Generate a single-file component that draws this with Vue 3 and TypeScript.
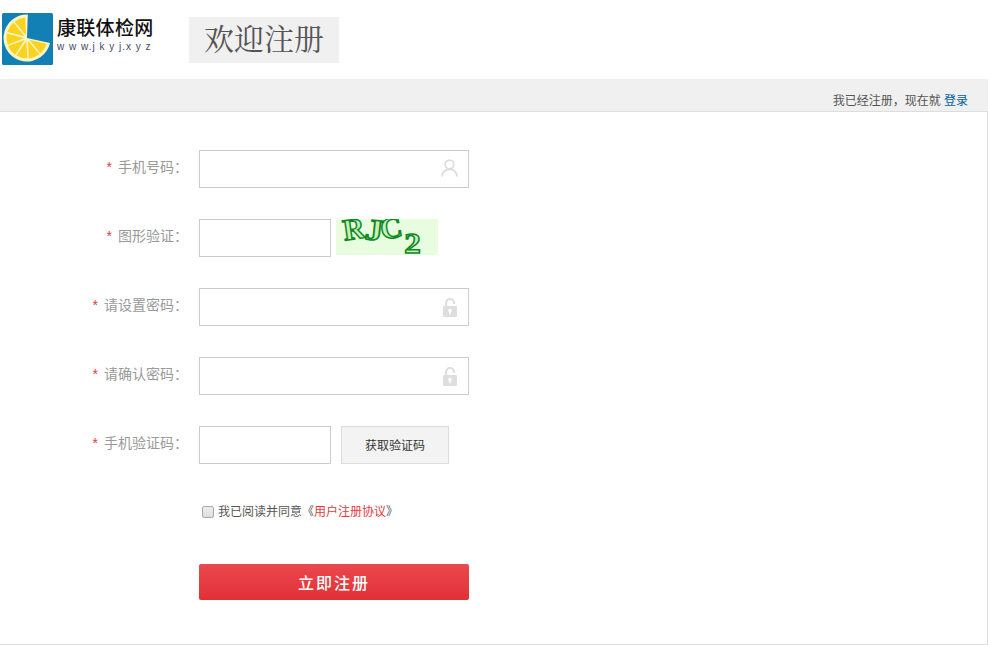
<script setup lang="ts">
const fields = [
  { label: "手机号码：", type: "user" },
  { label: "图形验证：", type: "captcha" },
  { label: "请设置密码：", type: "lock" },
  { label: "请确认密码：", type: "lock" },
  { label: "手机验证码：", type: "sms" },
];

// lemon segments, drawn from the centre of the fruit
const wedgeAngles = [16, 52, 88, 124, 160, 196, 232];
function wedge(a: number) {
  const r = (d: number) => (d * Math.PI) / 180;
  const cx = 25;
  const cy = 25;
  const p = (d: number, l: number) =>
    `${(cx + l * Math.cos(r(d))).toFixed(2)} ${(cy + l * Math.sin(r(d))).toFixed(2)}`;
  return `M${p(a + 17, 3)}L${p(a + 1, 20.5)}A20.500 20.500 0 0 1 ${p(a + 33, 20.5)}Z`;
}
</script>

<template>
  <div class="page">
    <header class="top">
      <div class="logo">
        <svg class="logo-mark" width="51" height="52" viewBox="0 0 51 52">
          <rect width="51" height="52" rx="1.5" fill="#1280b5" />
          <path d="M25 25L25.800 1.500A23.500 23.500 0 1 0 48 30Z" fill="#fbf5c4" />
          <path v-for="a in wedgeAngles" :key="a" :d="wedge(a)" fill="#fbd31f" />
        </svg>
        <div class="logo-text">
          <div class="logo-name">康联体检网</div>
          <div class="logo-url">w w w.j k y j.x y z</div>
        </div>
      </div>
      <h1 class="title">欢迎注册</h1>
    </header>

    <div class="bar">我已经注册，现在就 <a class="login">登录</a></div>

    <main class="panel">
      <div v-for="f in fields" :key="f.label" class="row">
        <label class="label"><i>*</i>{{ f.label }}</label>
        <div v-if="f.type === 'user' || f.type === 'lock'" class="input wide">
          <svg v-if="f.type === 'user'" class="icon user" width="17" height="18" viewBox="0 0 17 18" fill="none" stroke="#dcdcdc" stroke-width="1.700">
            <circle cx="8.500" cy="5.500" r="4.300" />
            <path d="M1 17.500C1.400 12.800 4.500 10.400 8.500 10.400s7.100 2.400 7.500 7.100" />
          </svg>
          <svg v-else class="icon lock" width="14" height="19" viewBox="0 0 14 19">
            <path d="M3 9V5a4 4 0 0 1 8 0v1" fill="none" stroke="#dedede" stroke-width="2.200" />
            <rect y="8" width="14" height="11" rx="1" fill="#dedede" />
            <circle cx="7" cy="12.500" r="1.800" fill="#fff" />
            <rect x="6.200" y="13" width="1.600" height="3.200" fill="#fff" />
          </svg>
        </div>
        <template v-else>
          <div class="input short"></div>
          <div v-if="f.type === 'captcha'" class="captcha">
            <span class="c1">R</span><span class="c2">J</span><span class="c3">C</span><span class="c4">2</span>
          </div>
          <button v-else class="sms" type="button">获取验证码</button>
        </template>
      </div>

      <div class="agree">
        <span class="check"></span>
        我已阅读并同意《<a class="terms">用户注册协议</a>》
      </div>

      <button class="submit" type="button">立即注册</button>
    </main>
  </div>
</template>

<style>
html,
body {
  margin: 0;
  background: #fff;
}
</style>

<style scoped>
.page {
  width: 988px;
  height: 645px;
  overflow: hidden;
  font-family: "Liberation Sans", "Noto Sans CJK SC", sans-serif;
}
.top {
  height: 79px;
  display: flex;
  align-items: flex-start;
}
.logo {
  display: flex;
  width: 187px;
  margin-top: 13px;
  padding-left: 2px;
  box-sizing: border-box;
}
.logo-mark {
  flex: none;
}
.logo-text {
  margin-left: 4px;
  padding-top: 4px;
}
.logo-name {
  font-size: 19px;
  font-weight: 500;
  line-height: 24px;
  letter-spacing: 0.3px;
  color: #111;
  white-space: nowrap;
}
.logo-url {
  font-size: 10px;
  line-height: 12px;
  color: #3d4a66;
  letter-spacing: 1px;
  white-space: nowrap;
}
.title {
  margin: 17px 0 0 2px;
  width: 150px;
  height: 46px;
  background: #f0f0f0;
  text-align: center;
  font-family: "Liberation Serif", "Noto Serif CJK SC", "Noto Sans CJK SC", serif;
  font-size: 30px;
  font-weight: 400;
  line-height: 46px;
  color: #555;
}
.bar {
  height: 32px;
  box-sizing: border-box;
  background: #f0f0f0;
  padding: 14px 20px 0 0;
  text-align: right;
  font-size: 12px;
  line-height: 16px;
  color: #555;
}
.login {
  color: #005ea7;
}
.panel {
  height: 534px;
  box-sizing: border-box;
  border-top: 1px solid #ddd;
  border-right: 1px solid #ddd;
  border-bottom: 1px solid #ddd;
  padding-top: 38px;
}
.row {
  display: flex;
  align-items: flex-start;
  height: 38px;
  margin-bottom: 31px;
}
.label {
  width: 188px;
  flex: none;
  margin-right: 11px;
  text-align: right;
  font-size: 14px;
  line-height: 34px;
  color: #999;
}
.label i {
  font-style: normal;
  color: #e4393c;
  margin-right: 6px;
}
.input {
  height: 38px;
  box-sizing: border-box;
  border: 1px solid #ccc;
  background: #fff;
  display: flex;
  align-items: center;
  justify-content: flex-end;
}
.wide {
  width: 270px;
}
.short {
  width: 132px;
}
.user {
  margin-right: 10px;
  margin-top: -3px;
}
.lock {
  margin-right: 11px;
}
.captcha {
  width: 102px;
  height: 36px;
  margin-left: 5px;
  background: #e8fde0;
  overflow: hidden;
  display: flex;
  padding-left: 8px;
  box-sizing: border-box;
  font-family: "Liberation Serif", serif;
  font-size: 30px;
  font-weight: 700;
  line-height: 20px;
  color: #c9efbe;
  -webkit-text-stroke: 1.500px #0c8a1c;
}
.captcha span {
  display: block;
}
.c1 {
  transform: rotate(-8deg);
}
.c2 {
  transform: rotate(6deg) translate(0, 1px) scaleX(1.200);
}
.c3 {
  transform: rotate(-10deg) translate(1px, -1px);
}
.c4 {
  transform: translate(3px, 14px) scaleX(1.100);
}
.sms {
  width: 108px;
  height: 38px;
  margin-left: 10px;
  padding: 0 0 2px;
  background: #f3f3f3;
  border: 1px solid #ddd;
  font-family: inherit;
  font-size: 12px;
  color: #333;
}
.agree {
  display: flex;
  align-items: center;
  margin: 40px 0 0 202px;
  height: 16px;
  font-size: 12px;
  line-height: 16px;
  color: #555;
}
.check {
  width: 12px;
  height: 12px;
  box-sizing: border-box;
  margin-right: 4px;
  border: 1px solid #aaa;
  border-radius: 2px;
  background: linear-gradient(#eee, #ddd);
}
.terms {
  color: #e4393c;
}
.submit {
  display: block;
  width: 270px;
  height: 36px;
  margin: 44px 0 0 199px;
  padding: 0;
  border: 0;
  border-radius: 2px;
  background: linear-gradient(#e9494f, #e23035);
  font-family: inherit;
  font-size: 16px;
  font-weight: 500;
  letter-spacing: 2px;
  color: #fff;
}
</style>
